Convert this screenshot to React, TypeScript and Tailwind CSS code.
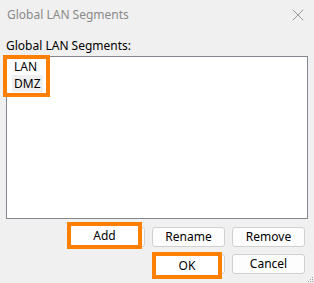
import { X } from 'lucide-react';

function Btn({ label, marked, offset }: { label: string; marked?: boolean; offset?: string }) {
  return (
    <div className="relative h-[20px] w-[73px]">
      <button
        type="button"
        className="flex h-full w-full items-center justify-center rounded-[3px] border border-[#d0d0d0] bg-[#fdfdfd] text-[12px] leading-none text-black"
      >
        {marked ? null : label}
      </button>
      {marked && (
        <div
          className={`absolute flex items-center justify-center border-4 border-[#ff8000] bg-white text-[12px] leading-none text-black ${offset}`}
        >
          {label}
        </div>
      )}
    </div>
  );
}

export default function App() {
  const segments = ['LAN', 'DMZ'];

  return (
    <div
      className="relative flex h-[283px] w-[314px] flex-col overflow-hidden bg-[#f0f0f0] text-black"
      style={{ fontFamily: '"Noto Sans", "Open Sans", sans-serif' }}
    >
      <div className="flex h-[30px] items-center justify-between pl-[7px] pr-[6px]">
        <span className="text-[12px] text-[#8a8a8a]">Global LAN Segments</span>
        <X size={20} strokeWidth={0.9} className="text-[#7a7a7a]" />
      </div>

      <div className="flex flex-col px-[6px]">
        <p className="mt-[8px] text-[12px] leading-[16px]">Global LAN Segments:</p>
        <div className="relative mt-[2px] h-[163px] border border-[#828790] bg-white pl-[5px] pt-[1px]">
          {segments.map((s, i) => (
            <div key={s} className="flex h-[17px] items-center">
              <span className={`px-[2px] text-[12px] leading-[17px] ${i === 1 ? 'bg-[#f0f0f0]' : ''}`}>{s}</span>
            </div>
          ))}
          <div className="absolute left-[-4px] top-[-2px] h-[42px] w-[47px] border-4 border-[#ff8000]" />
        </div>
      </div>

      <div className="mt-[8px] flex justify-end gap-[7px] pr-[9px]">
        <Btn label="Add" marked offset="left-[-5px] top-[-5px] h-[27px] w-[75px]" />
        <Btn label="Rename" />
        <Btn label="Remove" />
      </div>
      <div className="mt-[7px] flex justify-end gap-[7px] pr-[9px]">
        <Btn label="OK" marked offset="left-[0px] top-[-2px] h-[27px] w-[70px]" />
        <Btn label="Cancel" />
      </div>

      <div className="absolute bottom-[1px] right-[1px] grid grid-cols-3 gap-[1px]">
        {[0, 0, 1, 0, 1, 1, 1, 1, 1].map((v, i) => (
          <span key={i} className={`h-[1px] w-[1px] ${v ? 'bg-[#a0a0a0]' : ''}`} />
        ))}
      </div>
    </div>
  );
}
